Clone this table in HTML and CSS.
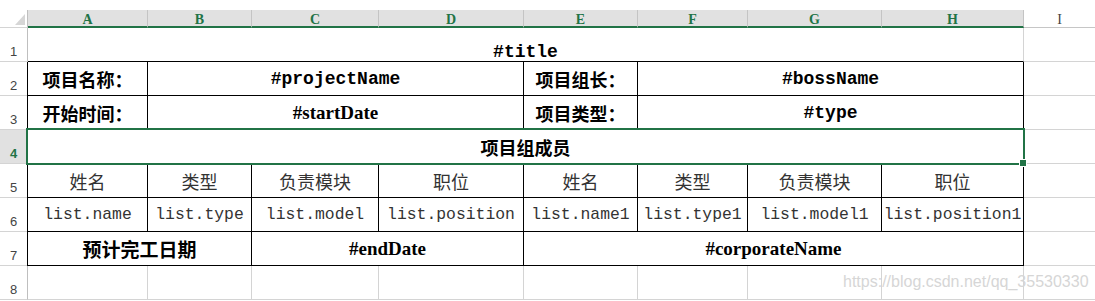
FILE: index.html
```html
<!DOCTYPE html>
<html lang="zh">
<head>
<meta charset="utf-8">
<title>Sheet</title>
<link rel="stylesheet" href="styles.css">
</head>
<body>
<div class="sheet">
  <div class="heads">
    <div class="corner"><span class="tri"></span></div>
    <div class="ch sel">A</div>
    <div class="ch sel">B</div>
    <div class="ch sel">C</div>
    <div class="ch sel">D</div>
    <div class="ch sel">E</div>
    <div class="ch sel">F</div>
    <div class="ch sel">G</div>
    <div class="ch sel">H</div>
    <div class="ch end">I</div>
  </div>
  <div class="grid">
    <div class="rh">1</div>
    <div class="c title span8 mono-b">#title</div>
    <div class="c end"></div>

    <div class="rh">2</div>
    <div class="c b first lbl">项目名称：</div>
    <div class="c b span3 mono-b">#projectName</div>
    <div class="c b lbl">项目组长：</div>
    <div class="c b span3 mono-b">#bossName</div>
    <div class="c end"></div>

    <div class="rh">3</div>
    <div class="c b first lbl">开始时间：</div>
    <div class="c b span3 times-b">#startDate</div>
    <div class="c b lbl">项目类型：</div>
    <div class="c b span3 mono-b">#type</div>
    <div class="c end"></div>

    <div class="rh sel">4</div>
    <div class="c b first span8 lbl">项目组成员</div>
    <div class="c end"></div>

    <div class="rh">5</div>
    <div class="c b first hd">姓名</div>
    <div class="c b hd">类型</div>
    <div class="c b hd">负责模块</div>
    <div class="c b hd">职位</div>
    <div class="c b hd">姓名</div>
    <div class="c b hd">类型</div>
    <div class="c b hd">负责模块</div>
    <div class="c b hd">职位</div>
    <div class="c end"></div>

    <div class="rh">6</div>
    <div class="c b first list">list.name</div>
    <div class="c b list">list.type</div>
    <div class="c b list">list.model</div>
    <div class="c b list">list.position</div>
    <div class="c b list">list.name1</div>
    <div class="c b list">list.type1</div>
    <div class="c b list">list.model1</div>
    <div class="c b list">list.position1</div>
    <div class="c end"></div>

    <div class="rh">7</div>
    <div class="c b first span2 lbl big">预计完工日期</div>
    <div class="c b span2 times-b">#endDate</div>
    <div class="c b span4 times-b">#corporateName</div>
    <div class="c end"></div>

    <div class="rh">8</div>
    <div class="c"></div>
    <div class="c"></div>
    <div class="c"></div>
    <div class="c"></div>
    <div class="c"></div>
    <div class="c"></div>
    <div class="c"></div>
    <div class="c"></div>
    <div class="c end"></div>
  </div>
  <div class="selection"><span class="handle"></span></div>
  <div class="watermark">https://blog.csdn.net/qq_35530330</div>
</div>
</body>
</html>
```

FILE: styles.css
```css
* { box-sizing: border-box; }
html, body { margin: 0; padding: 0; background: #fff; }
body { width: 1095px; height: 301px; overflow: hidden; }

.sheet { position: relative; width: 1095px; height: 301px; }

.heads, .grid {
  display: grid;
  grid-template-columns: 28px 120px 104px 127px 145px 114px 110px 134px 142px 71px;
}
.heads { height: 28px; }
.grid { grid-auto-rows: 34px; }

.corner {
  margin-top: 10px;
  height: 18px;
  border-right: 1px solid #bfbfbf;
  border-bottom: 1px solid #d4d4d4;
  display: flex;
  justify-content: flex-end;
  align-items: flex-end;
  padding: 0 2px 2px 0;
}
.tri {
  width: 10px;
  height: 11px;
  background: #d6d6d6;
  clip-path: polygon(100% 0, 100% 100%, 0 100%);
}

.ch {
  margin-top: 10px;
  height: 18px;
  border-right: 1px solid #d4d4d4;
  border-bottom: 1px solid #c6c6c6;
  font: 14px/16px "Liberation Serif", serif;
  color: #444;
  text-align: center;
  padding-top: 2px;
}
.ch.sel {
  background: #e1e1e1;
  border-bottom: 2px solid #217346;
  border-right-color: #c4c4c4;
  color: #217346;
  font-weight: bold;
}
.ch.end { border-right: 0; }

.rh {
  border-right: 1px solid #bfbfbf;
  border-bottom: 1px solid #d4d4d4;
  display: flex;
  align-items: flex-end;
  justify-content: center;
  font: 13px/15px "Liberation Sans", sans-serif;
  color: #444;
  padding-bottom: 2px;
}
.rh.sel {
  background: #e1e1e1;
  color: #217346;
  font-weight: bold;
}

.c {
  border-right: 1px solid #d4d4d4;
  border-bottom: 1px solid #d4d4d4;
  display: flex;
  align-items: center;
  justify-content: center;
  white-space: nowrap;
  color: #000;
}
.c.b { border-right-color: #000; border-bottom-color: #000; }
.c.first { box-shadow: -1px 0 0 #000; }
.c.title { border-bottom-color: #000; align-items: flex-end; }
.c.end { border-right: 0; }

.span2 { grid-column: span 2; }
.span3 { grid-column: span 3; }
.span4 { grid-column: span 4; }
.span8 { grid-column: span 8; }

.lbl { font: 700 18px/20px "Noto Sans CJK SC", sans-serif; }
.lbl.big { font-size: 19px; }
.mono-b { font: 700 18px/18px "Liberation Mono", monospace; }
.times-b { font: 700 19px/22px "Liberation Serif", serif; }
.hd { font: 400 18px/20px "Noto Sans CJK SC", sans-serif; color: #333; }
.list { font: 400 16.4px/20px "Liberation Mono", monospace; color: #333; }

.selection {
  position: absolute;
  left: 26px;
  top: 128px;
  width: 999px;
  height: 37px;
  border: 2px solid #217346;
}
.handle {
  position: absolute;
  right: -4px;
  bottom: -4px;
  width: 6px;
  height: 6px;
  background: #217346;
  border: 1px solid #fff;
  box-sizing: content-box;
}

.watermark {
  position: absolute;
  left: 843px;
  top: 273px;
  font: 16px/18px "Liberation Sans", sans-serif;
  color: #d6d6d6;
  white-space: nowrap;
}
```
